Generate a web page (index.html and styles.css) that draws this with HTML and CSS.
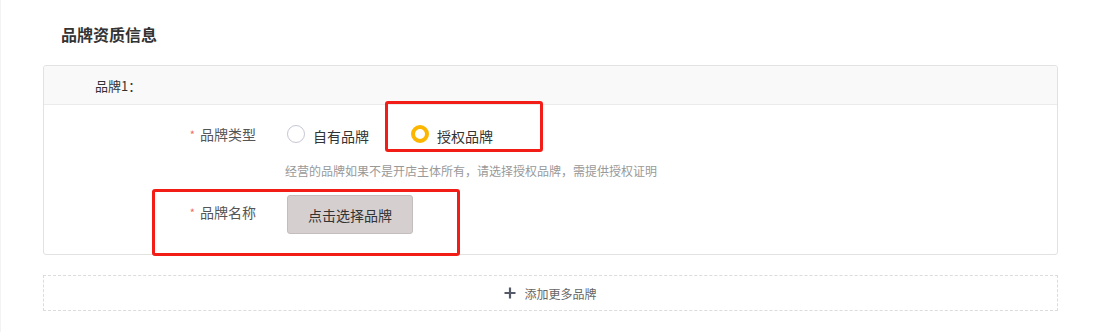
FILE: index.html
```html
<!DOCTYPE html>
<html lang="zh-CN">
<head>
<meta charset="utf-8">
<title>品牌资质信息</title>
<link rel="stylesheet" href="styles.css">
</head>
<body>
<div class="page">
  <h2 class="section-title">品牌资质信息</h2>
  <div class="card">
    <div class="card-header">品牌1：</div>
    <div class="card-body">
      <div class="form-row row-type">
        <div class="form-label"><span class="req">*</span>品牌类型</div>
        <div class="form-control radios">
          <label class="radio"><span class="radio-dot"></span><span class="radio-text">自有品牌</span></label>
          <label class="radio radio-checked"><span class="radio-dot"></span><span class="radio-text">授权品牌</span><span class="mark mark-radio"></span></label>
        </div>
      </div>
      <div class="hint">经营的品牌如果不是开店主体所有，请选择授权品牌，需提供授权证明</div>
      <div class="form-row row-name">
        <span class="mark mark-row"></span>
        <div class="form-label"><span class="req">*</span>品牌名称</div>
        <div class="form-control">
          <button class="btn-select" type="button">点击选择品牌</button>
        </div>
      </div>
    </div>
  </div>
  <div class="add-more">
    <svg class="plus" width="12" height="12" viewBox="0 0 12 12"><path d="M6 0.5V11.5M0.5 6H11.5" stroke="#555a66" stroke-width="2.2"/></svg>
    <span>添加更多品牌</span>
  </div>
</div>
</body>
</html>
```

FILE: styles.css
```css
* { box-sizing: border-box; }
html, body { margin: 0; padding: 0; background: #fff; }
body {
  font-family: "Noto Sans CJK SC", "Microsoft YaHei", "Noto Sans", sans-serif;
  color: #333;
}
.page {
  width: 1097px;
  min-height: 332px;
  padding: 23px 39px 0 43px;
  border-left: 1px solid #f3f3f3;
}
.section-title {
  margin: 0 0 20px 17px;
  font-size: 16px;
  line-height: 22px;
  font-weight: bold;
  color: #333;
}
.card {
  border: 1px solid #e2e2e2;
  border-radius: 3px;
  margin-left: -1px;
}
.card-header {
  height: 39px;
  line-height: 39px;
  padding-left: 51px;
  background: #f9f9f9;
  border-bottom: 1px solid #ebebeb;
  font-size: 13px;
  color: #333;
  border-radius: 3px 3px 0 0;
}
.card-body {
  padding: 14px 0 20px 0;
}
.form-row {
  display: flex;
  position: relative;
}
.form-label {
  width: 212px;
  text-align: right;
  font-size: 14px;
  line-height: 30px;
  color: #555;
}
.req {
  color: #f26b5b;
  font-size: 11px;
  margin-right: 5px;
  position: relative;
  top: -1px;
}
.form-control {
  margin-left: 31px;
}
.radios {
  display: flex;
  gap: 42px;
  height: 30px;
  align-items: center;
}
.radio {
  display: flex;
  align-items: center;
  position: relative;
  font-size: 14px;
  color: #333;
}
.radio-dot {
  width: 18px;
  height: 18px;
  border-radius: 50%;
  border: 1px solid #c6c6d6;
  margin-right: 8px;
  background: #fff;
}
.radio-checked .radio-dot {
  border: 4px solid #fdb600;
}
.radio-text {
  position: relative;
  top: 2px;
}
.mark {
  position: absolute;
  border: 3px solid #f21d16;
  border-radius: 3px;
  pointer-events: none;
}
.mark-radio {
  left: -26px;
  top: -23px;
  width: 158px;
  height: 51px;
}
.hint {
  margin: 12px 0 0 241px;
  font-size: 12px;
  line-height: 18px;
  color: #999;
}
.row-name {
  margin-top: 15px;
  align-items: flex-start;
}
.row-name .form-label {
  line-height: 20px;
  padding-top: 7px;
}
.mark-row {
  left: 108px;
  top: -6px;
  width: 308px;
  height: 67px;
}
.btn-select {
  width: 126px;
  height: 39px;
  background: #d5cfcf;
  border: 1px solid #c3bdbd;
  border-radius: 3px;
  font-family: inherit;
  font-size: 14px;
  color: #333;
  padding: 0;
}
.add-more {
  margin-top: 20px;
  margin-left: -1px;
  height: 36px;
  border: 1px dashed #dcdcdc;
  display: flex;
  align-items: center;
  justify-content: center;
  gap: 8px;
  font-size: 12px;
  color: #666;
}
.plus { display: block; }
```
